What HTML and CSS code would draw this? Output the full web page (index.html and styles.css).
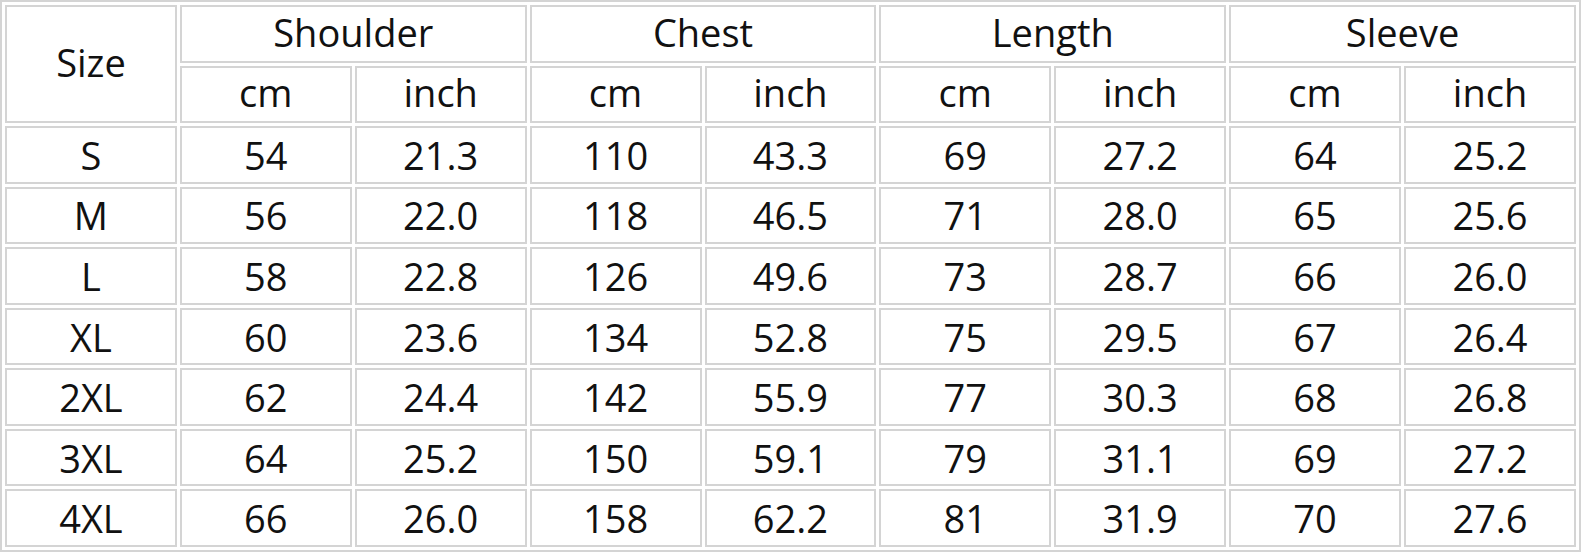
FILE: index.html
```html
<!DOCTYPE html>
<html>
<head>
<meta charset="utf-8">
<link rel="stylesheet" href="styles.css">
</head>
<body>
<table class="size-table">
  <tr class="head">
    <td rowspan="2">Size</td>
    <td colspan="2">Shoulder</td>
    <td colspan="2">Chest</td>
    <td colspan="2">Length</td>
    <td colspan="2">Sleeve</td>
  </tr>
  <tr class="head">
    <td>cm</td><td>inch</td><td>cm</td><td>inch</td><td>cm</td><td>inch</td><td>cm</td><td>inch</td>
  </tr>
  <tr><td>S</td><td>54</td><td>21.3</td><td>110</td><td>43.3</td><td>69</td><td>27.2</td><td>64</td><td>25.2</td></tr>
  <tr><td>M</td><td>56</td><td>22.0</td><td>118</td><td>46.5</td><td>71</td><td>28.0</td><td>65</td><td>25.6</td></tr>
  <tr><td>L</td><td>58</td><td>22.8</td><td>126</td><td>49.6</td><td>73</td><td>28.7</td><td>66</td><td>26.0</td></tr>
  <tr><td>XL</td><td>60</td><td>23.6</td><td>134</td><td>52.8</td><td>75</td><td>29.5</td><td>67</td><td>26.4</td></tr>
  <tr><td>2XL</td><td>62</td><td>24.4</td><td>142</td><td>55.9</td><td>77</td><td>30.3</td><td>68</td><td>26.8</td></tr>
  <tr><td>3XL</td><td>64</td><td>25.2</td><td>150</td><td>59.1</td><td>79</td><td>31.1</td><td>69</td><td>27.2</td></tr>
  <tr><td>4XL</td><td>66</td><td>26.0</td><td>158</td><td>62.2</td><td>81</td><td>31.9</td><td>70</td><td>27.6</td></tr>
</table>
</body>
</html>
```

FILE: styles.css
```css
html, body {
  margin: 0;
  padding: 0;
  background: #fff;
}
.size-table {
  width: 1581px;
  height: 552px;
  table-layout: fixed;
  border-collapse: separate;
  border-spacing: 3px;
  border: 2px solid #d4d4d4;
  font-family: "Open Sans", "Noto Sans", sans-serif;
  font-size: 38px;
  color: #111;
}
.size-table td {
  border: 2px solid #d4d4d4;
  text-align: center;
  vertical-align: middle;
  padding: 2px 0;
  line-height: 1;
}
.size-table .head td {
  padding: 0 0 4px;
}
```
